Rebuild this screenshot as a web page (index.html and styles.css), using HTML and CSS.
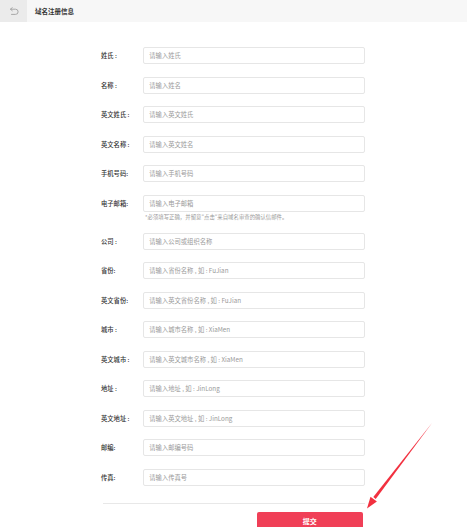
FILE: index.html
```html
<!DOCTYPE html>
<html lang="zh">
<head>
<meta charset="utf-8">
<title>域名注册信息</title>
<link rel="stylesheet" href="styles.css">
</head>
<body>
<header class="topbar">
  <div class="back">
    <svg width="10" height="8" viewBox="0 0 10 8" fill="none" stroke="#a0a0a0" stroke-width="0.9" stroke-linecap="round" stroke-linejoin="round">
      <path d="M1.5 2.2 H6.5 A2.6 2.6 0 0 1 6.5 7.4 H2.5"/>
      <path d="M3.3 0.6 L1.5 2.2 L3.3 3.8"/>
    </svg>
  </div>
  <div class="title">域名注册信息</div>
</header>

<main class="form">
  <div class="row"><label class="lbl">姓氏 :</label><input class="field" placeholder="请输入姓氏"></div>
  <div class="row"><label class="lbl">名称 :</label><input class="field" placeholder="请输入姓名"></div>
  <div class="row"><label class="lbl">英文姓氏 :</label><input class="field" placeholder="请输入英文姓氏"></div>
  <div class="row"><label class="lbl">英文名称 :</label><input class="field" placeholder="请输入英文姓名"></div>
  <div class="row"><label class="lbl">手机号码:</label><input class="field" placeholder="请输入手机号码"></div>
  <div class="group">
    <div class="row tight"><label class="lbl">电子邮箱:</label><input class="field" placeholder="请输入电子邮箱"></div>
    <div class="hint">*必须填写正确，并留意"点击"来自域名审查的确认信邮件。</div>
  </div>
  <div class="row"><label class="lbl">公司 :</label><input class="field" placeholder="请输入公司或组织名称"></div>
  <div class="row"><label class="lbl">省份:</label><input class="field" placeholder="请输入省份名称 , 如 : FuJian"></div>
  <div class="row"><label class="lbl">英文省份:</label><input class="field" placeholder="请输入英文省份名称 , 如 : FuJian"></div>
  <div class="row"><label class="lbl">城市 :</label><input class="field" placeholder="请输入城市名称 , 如 : XiaMen"></div>
  <div class="row"><label class="lbl">英文城市 :</label><input class="field" placeholder="请输入英文城市名称 , 如 : XiaMen"></div>
  <div class="row"><label class="lbl">地址 :</label><input class="field" placeholder="请输入地址 , 如 : JinLong"></div>
  <div class="row"><label class="lbl">英文地址 :</label><input class="field" placeholder="请输入英文地址 , 如 : JinLong"></div>
  <div class="row"><label class="lbl">邮编:</label><input class="field" placeholder="请输入邮编号码"></div>
  <div class="row last"><label class="lbl">传真:</label><input class="field" placeholder="请输入传真号"></div>
  <div class="divider"></div>
  <div class="actions"><button class="submit">提交</button></div>
</main>

<svg class="pointer" width="467" height="527" viewBox="0 0 467 527">
  <polygon points="432.2,422.8 431.8,423.2 373.3,497.1 375.7,498.9" fill="#f2303f"/>
  <polygon points="367,508.5 376.9,501.6 370.5,496.8" fill="#f2303f"/>
</svg>
</body>
</html>
```
FILE: styles.css
```css
html, body {
  margin: 0;
  padding: 0;
  background: #ffffff;
  font-family: "Noto Sans CJK SC", "Noto Sans", sans-serif;
  color: #333333;
}

.topbar {
  display: flex;
  align-items: stretch;
  height: 22px;
  background: #f7f7f7;
}

.back {
  width: 27px;
  background: #ebebeb;
  display: flex;
  align-items: center;
  justify-content: center;
}

.title {
  display: flex;
  align-items: center;
  padding-left: 8px;
  font-size: 6.5px;
  font-weight: 700;
  color: #333333;
}

.form {
  display: flex;
  flex-direction: column;
  width: 264px;
  margin-left: 101px;
  padding-top: 25.3px;
}

.row {
  display: flex;
  align-items: center;
  height: 17px;
  margin-bottom: 12.5px;
}

.row.tight { margin-bottom: 0; }
.row.last { margin-bottom: 0; }

.group {
  display: flex;
  flex-direction: column;
  margin-bottom: 12px;
}

.lbl {
  width: 42.3px;
  flex: none;
  font-size: 6.3px;
  color: #333333;
  font-weight: 500;
  white-space: nowrap;
}

.field {
  box-sizing: border-box;
  width: 222px;
  height: 17px;
  margin: 0;
  padding: 0 5px;
  border: 1px solid #e6e6e6;
  border-radius: 2px;
  background: #ffffff;
  font-family: "Noto Sans CJK SC", "Noto Sans", sans-serif;
  font-size: 6.3px;
  color: #333333;
  outline: none;
}

.field::placeholder {
  color: #9a9a9a;
}

.hint {
  margin-left: 44px;
  margin-top: 1.2px;
  line-height: 8px;
  font-size: 5.4px;
  color: #999999;
  white-space: nowrap;
}

.divider {
  margin-top: 17px;
  margin-left: 1.5px;
  height: 1px;
  background: #e8e8e8;
}

.actions {
  display: flex;
  padding-top: 7.7px;
  padding-left: 155.7px;
}

.submit {
  width: 106px;
  height: 26px;
  border: none;
  border-radius: 2px;
  background: #f03f57;
  color: #ffffff;
  font-family: "Noto Sans CJK SC", "Noto Sans", sans-serif;
  font-size: 7px;
  font-weight: 700;
  padding: 0 0 8px 0;
}

.pointer {
  position: absolute;
  left: 0;
  top: 0;
  pointer-events: none;
}
```
